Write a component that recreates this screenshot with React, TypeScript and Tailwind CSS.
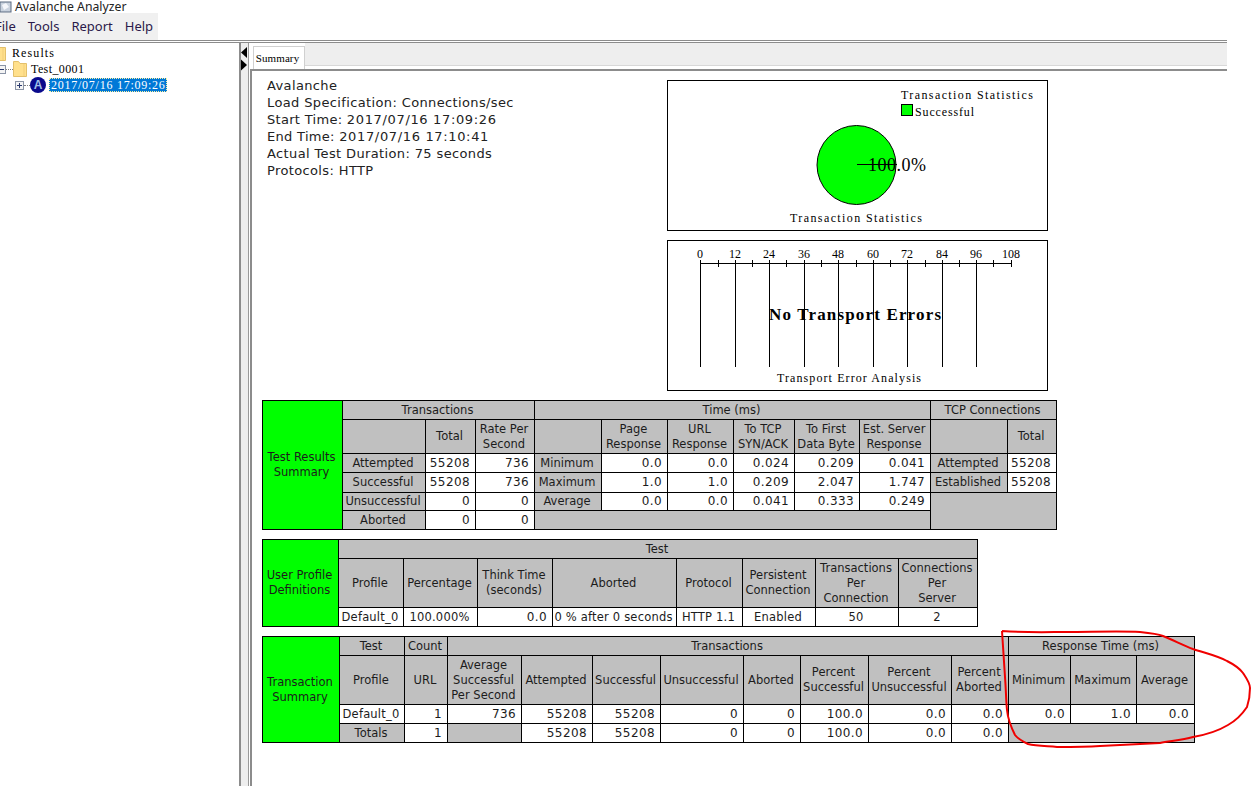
import type { ReactNode } from "react";

const chartFont = "'Liberation Serif', serif";

function H({ children, cs, rs, cn = "" }: { children?: ReactNode; cs?: number; rs?: number; cn?: string }) {
  return (
    <td colSpan={cs} rowSpan={rs} className={`border border-black bg-[#c0c0c0] p-0 pr-[2px] text-center align-middle whitespace-nowrap ${cn}`}>
      {children}
    </td>
  );
}

function V({ children, center }: { children?: ReactNode; center?: boolean }) {
  return (
    <td
      className={`border border-black bg-white p-0 align-middle whitespace-nowrap ${
        center ? "pr-[2px] text-center tracking-[0.2px]" : "pr-[5px] text-right text-[12px] tracking-[0.4px]"
      }`}
    >
      {children}
    </td>
  );
}

function Side({ rs, children }: { rs: number; children: ReactNode }) {
  return (
    <td rowSpan={rs} className="border border-black bg-[#00ff00] p-0 pr-[2px] text-center align-middle">
      {children}
    </td>
  );
}

function Cols({ widths }: { widths: string[] }) {
  return (
    <colgroup>
      {widths.map((w, i) => (
        <col key={i} className={w} />
      ))}
    </colgroup>
  );
}

function TestResults() {
  return (
    <table className="w-[794px] table-fixed border-collapse text-[11.5px] leading-[15px] text-[#1c1c1c]">
      <Cols widths={["w-[80px]", "w-[83px]", "w-[50px]", "w-[59px]", "w-[67px]", "w-[66px]", "w-[66px]", "w-[61px]", "w-[65px]", "w-[71px]", "w-[77px]", "w-[49px]"]} />
      <tbody>
        <tr className="h-[19px]">
          <Side rs={6}>Test Results<br />Summary</Side>
          <H cs={3}>Transactions</H>
          <H cs={6}>Time (ms)</H>
          <H cs={2}>TCP Connections</H>
        </tr>
        <tr className="h-[34px]">
          <H />
          <H>Total</H>
          <H>Rate Per<br />Second</H>
          <H />
          <H>Page<br />Response</H>
          <H>URL<br />Response</H>
          <H>To TCP<br />SYN/ACK</H>
          <H>To First<br />Data Byte</H>
          <H>Est. Server<br />Response</H>
          <H />
          <H>Total</H>
        </tr>
        <tr className="h-[19px]">
          <H>Attempted</H><V>55208</V><V>736</V>
          <H>Minimum</H><V>0.0</V><V>0.0</V><V>0.024</V><V>0.209</V><V>0.041</V>
          <H>Attempted</H><V>55208</V>
        </tr>
        <tr className="h-[20px]">
          <H>Successful</H><V>55208</V><V>736</V>
          <H>Maximum</H><V>1.0</V><V>1.0</V><V>0.209</V><V>2.047</V><V>1.747</V>
          <H>Established</H><V>55208</V>
        </tr>
        <tr className="h-[18px]">
          <H>Unsuccessful</H><V>0</V><V>0</V>
          <H>Average</H><V>0.0</V><V>0.0</V><V>0.041</V><V>0.333</V><V>0.249</V>
          <H cs={2} rs={2} />
        </tr>
        <tr className="h-[19px]">
          <H>Aborted</H><V>0</V><V>0</V>
          <H cs={6} />
        </tr>
      </tbody>
    </table>
  );
}

function UserProfiles() {
  return (
    <table className="w-[715px] table-fixed border-collapse text-[11.5px] leading-[15px] text-[#1c1c1c]">
      <Cols widths={["w-[76px]", "w-[65px]", "w-[74px]", "w-[75px]", "w-[124px]", "w-[66px]", "w-[73px]", "w-[83px]", "w-[79px]"]} />
      <tbody>
        <tr className="h-[19px]">
          <Side rs={3}>User Profile<br />Definitions</Side>
          <H cs={8}>Test</H>
        </tr>
        <tr className="h-[49px]">
          <H>Profile</H>
          <H>Percentage</H>
          <H>Think Time<br />(seconds)</H>
          <H>Aborted</H>
          <H>Protocol</H>
          <H>Persistent<br />Connection</H>
          <H>Transactions<br />Per<br />Connection</H>
          <H>Connections<br />Per<br />Server</H>
        </tr>
        <tr className="h-[19px]">
          <V center>Default_0</V>
          <V center>100.000%</V>
          <V>0.0</V>
          <V center>0 % after 0 seconds</V>
          <V center>HTTP 1.1</V>
          <V center>Enabled</V>
          <V center>50</V>
          <V center>2</V>
        </tr>
      </tbody>
    </table>
  );
}

function TransactionSummary() {
  return (
    <table className="w-[932px] table-fixed border-collapse text-[11.5px] leading-[15px] text-[#1c1c1c]">
      <Cols widths={["w-[77px]", "w-[65px]", "w-[43px]", "w-[74px]", "w-[71px]", "w-[68px]", "w-[83px]", "w-[57px]", "w-[68px]", "w-[83px]", "w-[57px]", "w-[62px]", "w-[66px]", "w-[58px]"]} />
      <tbody>
        <tr className="h-[19px]">
          <Side rs={4}>Transaction<br />Summary</Side>
          <H>Test</H>
          <H>Count</H>
          <H cs={8}>Transactions</H>
          <H cs={3}>Response Time (ms)</H>
        </tr>
        <tr className="h-[49px]">
          <H>Profile</H>
          <H>URL</H>
          <H>Average<br />Successful<br />Per Second</H>
          <H>Attempted</H>
          <H>Successful</H>
          <H>Unsuccessful</H>
          <H>Aborted</H>
          <H>Percent<br />Successful</H>
          <H>Percent<br />Unsuccessful</H>
          <H>Percent<br />Aborted</H>
          <H>Minimum</H>
          <H>Maximum</H>
          <H>Average</H>
        </tr>
        <tr className="h-[19px]">
          <V center>Default_0</V>
          <V>1</V><V>736</V><V>55208</V><V>55208</V><V>0</V><V>0</V><V>100.0</V><V>0.0</V><V>0.0</V><V>0.0</V><V>1.0</V><V>0.0</V>
        </tr>
        <tr className="h-[19px]">
          <H>Totals</H>
          <V>1</V><H /><V>55208</V><V>55208</V><V>0</V><V>0</V><V>100.0</V><V>0.0</V><V>0.0</V>
          <H cs={3} />
        </tr>
      </tbody>
    </table>
  );
}

function PieChart() {
  return (
    <svg width="379" height="149" className="block" style={{ fontFamily: chartFont }}>
      <text x="233" y="18" fontSize="12" textLength="132" fill="#000">Transaction Statistics</text>
      <rect x="233.5" y="23.5" width="11" height="11" fill="#00ff00" stroke="#000" />
      <text x="247" y="35" fontSize="12" textLength="59" fill="#000">Successful</text>
      <circle cx="188.5" cy="84" r="39.5" fill="#00ff00" stroke="#000" />
      <line x1="189" y1="83.5" x2="229" y2="83.5" stroke="#000" />
      <text x="200" y="90" fontSize="18" textLength="58" fill="#000">100.0%</text>
      <text x="122" y="141" fontSize="12" textLength="132" fill="#000">Transaction Statistics</text>
    </svg>
  );
}

function RulerChart() {
  const majors = [32, 67, 101, 136, 170, 205, 239, 274, 308, 343];
  const minors = [50, 84, 118, 153, 188, 222, 257, 291, 325];
  return (
    <svg width="379" height="149" className="block" style={{ fontFamily: chartFont }}>
      {majors.map((x, i) => (
        <text key={x} x={x} y="17" fontSize="12" textAnchor="middle" fill="#000">
          {i * 12}
        </text>
      ))}
      <line x1="32" y1="22.5" x2="344" y2="22.5" stroke="#000" />
      {majors.map((x, i) => (
        <line key={x} x1={x + 0.5} y1="19" x2={x + 0.5} y2={i === 9 ? 26 : 126} stroke="#000" />
      ))}
      {minors.map((x) => (
        <line key={x} x1={x + 0.5} y1="19" x2={x + 0.5} y2="26" stroke="#000" />
      ))}
      <text x="101" y="79" fontSize="17" fontWeight="bold" textLength="172" fill="#000">No Transport Errors</text>
      <text x="109" y="141" fontSize="12" textLength="144" fill="#000">Transport Error Analysis</text>
    </svg>
  );
}

function Folder({ cn }: { cn: string }) {
  return (
    <svg width="14" height="16" viewBox="0 0 14 16" className={`shrink-0 ${cn}`}>
      <path d="M0.5 0.5H5.5L7 2.5H13.5V15.5H0.5Z" fill="#ffe08c" stroke="#e3c06c" />
      <path d="M11 3V15" stroke="#f3cf7a" />
    </svg>
  );
}

function TreeBox({ plus }: { plus?: boolean }) {
  return (
    <svg width="9" height="9" viewBox="0 0 9 9" className="shrink-0">
      <rect x="0.5" y="0.5" width="8" height="8" fill="#f4f4f4" stroke="#8a94a6" />
      <path d="M2 4.5H7" stroke="#2a3a70" />
      {plus && <path d="M4.5 2V7" stroke="#2a3a70" />}
    </svg>
  );
}

function Tree() {
  return (
    <div className="w-[241px] shrink-0 border-r-2 border-[#8c8c8c] bg-white pt-[2px] text-[12px] text-black" style={{ fontFamily: chartFont }}>
      <div className="flex h-[16px] items-center">
        <Folder cn="-ml-[8px]" />
        <span className="ml-[6px] tracking-[1.1px]">Results</span>
      </div>
      <div className="flex h-[16px] items-center">
        <div className="-ml-[3px]"><TreeBox /></div>
        <div className="w-[7px] border-t border-dotted border-[#808080]" />
        <Folder cn="" />
        <span className="ml-[4px] tracking-[0.4px]">Test_0001</span>
      </div>
      <div className="flex h-[16px] items-center pl-[15px]">
        <TreeBox plus />
        <div className="w-[6px] border-t border-dotted border-[#808080]" />
        <span className="flex h-[16px] w-[16px] shrink-0 items-center justify-center rounded-full bg-[#0a0a8c] text-[12px] font-bold text-[#9fc0e8] [font-family:'Liberation_Sans',sans-serif]">A</span>
        <span className="ml-[3px] h-[14px] w-[118px] border border-dotted border-[#fff3a0] bg-[#0078d7] pl-[1px] text-[12px] leading-[12px] tracking-[0.75px] whitespace-nowrap text-white">2017/07/16 17:09:26</span>
      </div>
    </div>
  );
}

function Splitter() {
  return (
    <div className="w-[8px] shrink-0 border-r border-[#9a9a9a] bg-[#eeeeee] pt-[4px]">
      <svg width="7" height="24" viewBox="0 0 7 24" className="block">
        <path d="M6 0V11L0 5.5Z" fill="#000" />
        <path d="M0 12.5V23.5L6 18Z" fill="#000" />
      </svg>
    </div>
  );
}

function Annotation() {
  return (
    <svg width="1251" height="786" className="pointer-events-none absolute top-0 left-0">
      <path
        d="M1002 631 C1030 633 1050 632 1067 632 C1090 632 1120 631 1140 632 C1150 633 1158 634 1163 636 C1175 641 1185 646 1193 649 C1205 653 1218 656 1227 661 C1235 665 1240 669 1243 673 C1247 679 1250 683 1250 688 C1250 695 1249 701 1247 707 C1243 713 1237 720 1228 725 C1218 731 1205 735 1193 737 C1182 740 1170 741 1160 743 C1140 744 1120 745 1100 746 C1085 747 1070 747 1057 747 C1045 746 1036 746 1028 744 C1022 741 1018 739 1015 735 C1011 727 1008 720 1007 710 C1006 700 1006 690 1005 677 C1004 660 1003 645 1002 631"
        fill="none"
        stroke="#f00000"
        strokeWidth="2"
      />
    </svg>
  );
}

export default function App() {
  return (
    <div className="relative h-[786px] w-[1251px] overflow-hidden bg-white [font-family:'DejaVu_Sans',sans-serif]">
      <div className="flex h-[13px] items-center text-[12.25px] leading-[13px] text-[#222] [font-family:'Noto_Sans',sans-serif]">
        <svg width="12" height="12" viewBox="0 0 12 12" className="shrink-0">
          <rect x="0" y="1" width="11" height="10" fill="#c9d2de" stroke="#5a6a80" />
          <path d="M2 4L6 2L9 6L4 9Z" fill="#f4f6fa" />
        </svg>
        <span className="ml-[3px]">Avalanche Analyzer</span>
      </div>
      <div className="flex h-[27px] w-[158px] items-center gap-[12px] overflow-hidden bg-[#f0f0f0] text-[13px] text-[#2a1a4a] [font-family:'Noto_Sans',sans-serif]">
        <span className="-ml-[5px]">File</span>
        <span>Tools</span>
        <span>Report</span>
        <span>Help</span>
      </div>

      <div className="flex h-[746px] w-[1227px] border-t-[3px] border-double border-[#8c8c8c]">
        <Tree />
        <Splitter />
        <div className="ml-[1px] flex min-w-0 flex-1 flex-col">
          <div className="flex h-[26px] items-end pl-[3px]">
            <div className="flex h-[23px] w-[52px] shrink-0 items-center justify-center border-t border-r border-l border-[#d0d0d0] bg-white pr-[3px] text-[11px] text-black" style={{ fontFamily: chartFont }}>
              <span className="tracking-[0.1px]">Summary</span>
            </div>
            <div className="mb-[3px] h-[23px] flex-1 border-b border-[#d8d8d8] bg-[#eeeeee]" />
          </div>
          <div className="flex-1 border-t-2 border-l-2 border-[#8c8c8c] pt-[9px] pl-[10px]">
            <div className="flex h-[320px] items-start">
              <div className="-mt-[3px] ml-[5px] w-[400px] shrink-0 text-[13px] leading-[17px] tracking-[0.37px] text-[#222]">
                <p>Avalanche</p>
                <p>Load Specification: Connections/sec</p>
                <p className="tracking-[0.3px]">Start Time: <span className="tracking-[0.65px]">2017/07/16 17:09:26</span></p>
                <p className="tracking-[0.3px]">End Time: <span className="tracking-[0.65px]">2017/07/16 17:10:41</span></p>
                <p>Actual Test Duration: 75 seconds</p>
                <p>Protocols: HTTP</p>
              </div>
              <div className="flex flex-col gap-[9px]">
                <div className="border border-black bg-white"><PieChart /></div>
                <div className="border border-black bg-white"><RulerChart /></div>
              </div>
            </div>
            <div className="flex flex-col items-start gap-[9px]">
              <TestResults />
              <UserProfiles />
              <TransactionSummary />
            </div>
          </div>
        </div>
      </div>
      <Annotation />
    </div>
  );
}
